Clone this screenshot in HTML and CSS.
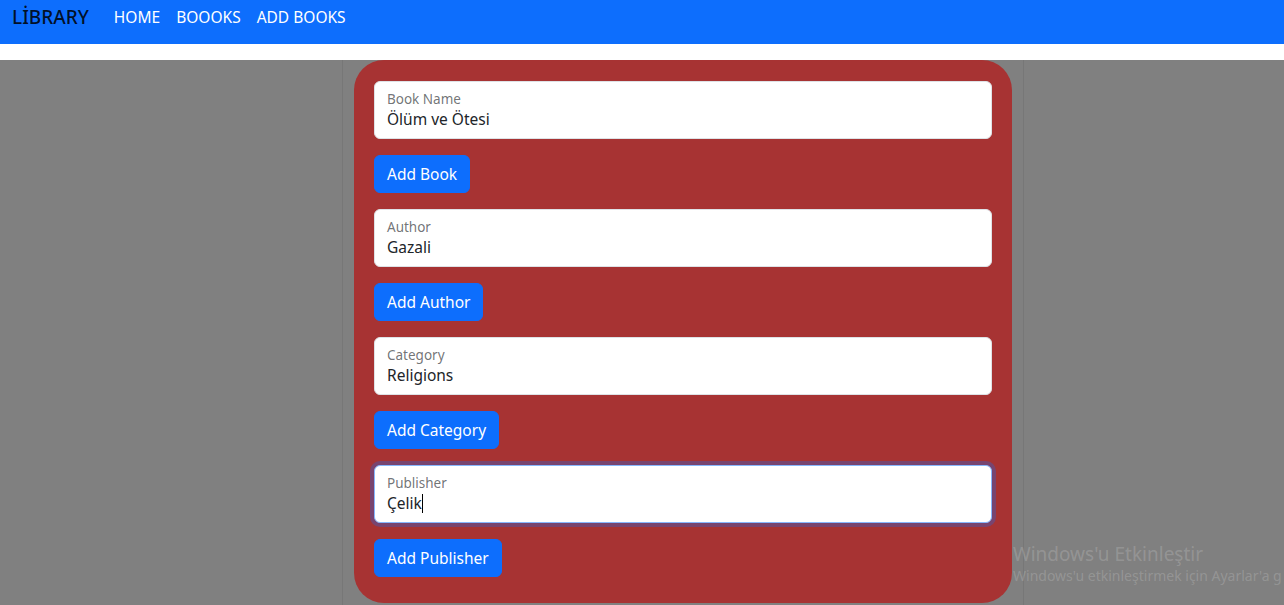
FILE: index.html
```html
<!DOCTYPE html>
<html>
<head>
<meta charset="utf-8">
<link rel="stylesheet" href="styles.css">
</head>
<body>
<nav class="navbar">
  <span class="brand">LİBRARY</span>
  <a class="nav-link">HOME</a>
  <a class="nav-link">BOOOKS</a>
  <a class="nav-link">ADD BOOKS</a>
</nav>
<div class="spacer"></div>
<main class="backdrop">
  <div class="container">
    <div class="card">
      <div class="field">
        <div class="label">Book Name</div>
        <div class="value">Ölüm ve Ötesi</div>
      </div>
      <button class="btn">Add Book</button>
      <div class="field">
        <div class="label">Author</div>
        <div class="value">Gazali</div>
      </div>
      <button class="btn">Add Author</button>
      <div class="field">
        <div class="label">Category</div>
        <div class="value">Religions</div>
      </div>
      <button class="btn">Add Category</button>
      <div class="field focused">
        <div class="label">Publisher</div>
        <div class="value">Çelik<span class="caret"></span></div>
      </div>
      <button class="btn">Add Publisher</button>
    </div>
  </div>
</main>
<div class="watermark">
  <div class="wm-title">Windows'u Etkinleştir</div>
  <div class="wm-sub">Windows'u etkinleştirmek için Ayarlar'a g</div>
</div>
</body>
</html>
```

FILE: styles.css
```css
* { box-sizing: border-box; }
html, body { margin: 0; padding: 0; }
body {
  font-family: "Noto Sans", "Open Sans", sans-serif;
  background: #808080;
  height: 605px;
  overflow: hidden;
  color: #212529;
}
.navbar {
  height: 44px;
  background: #0d6efd;
  display: flex;
  align-items: center;
  padding: 0 12px 10px;
}
.brand {
  font-size: 19px;
  font-weight: 500;
  color: rgba(0,0,0,.85);
  margin-right: 17px;
}
.nav-link {
  color: #fff;
  font-size: 15.5px;
  padding: 0 8px;
}
.spacer { height: 16px; background: #fff; }
.backdrop {
  display: flex;
  padding-left: 342px;
}
.container {
  width: 682px;
  padding: 0 11px;
  border-left: 1px solid #777;
  border-right: 1px solid #777;
  height: 545px;
}
.card {
  background: #a73333;
  border-radius: 30px;
  padding: 21px 20px 26px;
  display: flex;
  flex-direction: column;
  align-items: flex-start;
  gap: 16px;
}
.field {
  position: relative;
  width: 100%;
  height: 58px;
  background: #fff;
  border: 1px solid #dee2e6;
  border-radius: 6px;
  padding: 25px 12px 8px;
}
.field.focused {
  border-color: #86b7fe;
  box-shadow: 0 0 0 4px rgba(13,110,253,.3);
}
.label {
  position: absolute;
  top: 9px;
  left: 12px;
  font-size: 13.5px;
  line-height: 16px;
  color: rgba(33,37,41,.65);
}
.value {
  font-size: 15.5px;
  line-height: 24px;
  color: #212529;
}
.caret {
  display: inline-block;
  width: 1px;
  height: 19px;
  background: #000;
  vertical-align: -4px;
}
.btn {
  font-family: inherit;
  font-size: 15.5px;
  line-height: 24px;
  padding: 6px 12px;
  border: 1px solid #0d6efd;
  background: #0d6efd;
  color: #fff;
  border-radius: 6px;
}
.watermark {
  position: absolute;
  left: 1013px;
  top: 542px;
  color: rgba(255,255,255,.18);
  white-space: nowrap;
}
.wm-title { font-size: 19px; line-height: 24px; }
.wm-sub { font-size: 14px; line-height: 20px; }
```
